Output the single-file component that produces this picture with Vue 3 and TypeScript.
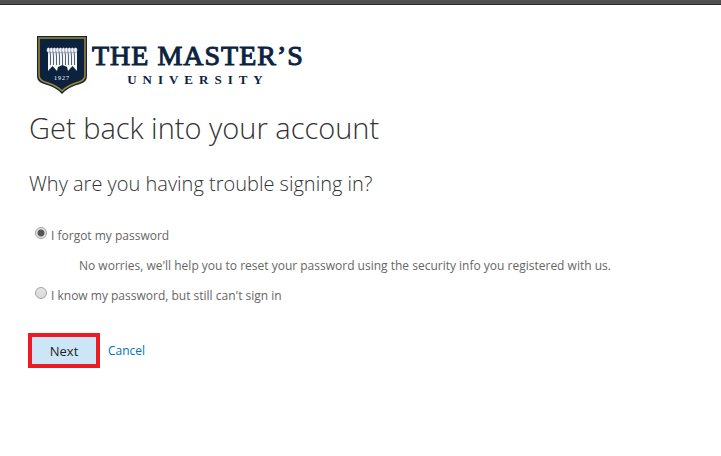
<script setup lang="ts">
import { ref } from 'vue'

type Reason = 'forgot' | 'blocked'

const reason = ref<Reason>('forgot')
const folds: number[] = [11, 14, 17, 20, 23, 26, 29, 32, 35, 38]
</script>

<template>
  <div class="page">
    <div class="topbar"></div>
    <main class="content">
      <header class="brand">
        <svg class="shield" width="50" height="58" viewBox="0 0 50 58" aria-hidden="true">
          <path d="M0 0H50V40Q50 46 43 48Q31 51 25 58Q19 51 7 48Q0 46 0 40Z" fill="#0c2340" />
          <path d="M2 2H48V39Q48 44 42 46Q31 49 25 55Q19 49 8 46Q2 44 2 39Z" fill="none" stroke="#a8862c" stroke-width="1.5" />
          <path d="M11 15H40V35L35.500 30L31 35L30 31L25.500 29L21 31L20 35L15.500 30L11 35Z" fill="#f4f5f7" />
          <path
            v-for="x in folds.slice(0, 9)"
            :key="x"
            :d="`M${x + 2} 16L${x + 2.5} 20V29`"
            fill="none"
            stroke="#0c2340"
            stroke-width="0.7"
          />
          <ellipse
            v-for="x in folds"
            :key="`loop-${x}`"
            :cx="x + 0.5"
            cy="14"
            rx="1.9"
            ry="2.6"
            fill="#f4f5f7"
            stroke="#0c2340"
            stroke-width="0.3"
          />
          <text x="25" y="44" class="year">1927</text>
        </svg>
        <div class="wordmark">
          <span class="name">THE MASTER’S</span>
          <span class="kind">UNIVERSITY</span>
        </div>
      </header>

      <h1>Get back into your account</h1>
      <h2 id="question">Why are you having trouble signing in?</h2>

      <form @submit.prevent>
        <div class="reasons" role="radiogroup" aria-labelledby="question">
          <div class="choice">
            <input id="forgot" v-model="reason" type="radio" name="reason" value="forgot" />
            <label for="forgot">I forgot my password</label>
          </div>
          <p class="hint">No worries, we'll help you to reset your password using the security info you registered with us.</p>
          <div class="choice">
            <input id="blocked" v-model="reason" type="radio" name="reason" value="blocked" />
            <label for="blocked">I know my password, but still can't sign in</label>
          </div>
        </div>
        <div class="actions">
          <button type="submit">Next</button>
          <a href="#">Cancel</a>
        </div>
      </form>
    </main>
  </div>
</template>

<style>
body {
  margin: 0;
  background: #fff;
}
</style>

<style scoped>
.page {
  font-family: "Segoe UI", "Open Sans", "Noto Sans", sans-serif;
  font-size: 12px;
  color: #666;
}
.topbar {
  box-sizing: border-box;
  height: 5px;
  background: #505050;
  border-bottom: 1px solid #2b2b2b;
}
.content {
  padding: 31px 28px;
}
.brand {
  display: flex;
  gap: 5px;
  padding-left: 9px;
}
.shield {
  flex: none;
}
.year {
  font: 6px "Liberation Serif", serif;
  letter-spacing: 1px;
  text-anchor: middle;
  fill: #fff;
}
.wordmark {
  display: flex;
  flex-direction: column;
  align-items: center;
  padding-top: 4px;
  color: #0c2340;
  font-family: "Liberation Serif", serif;
  white-space: nowrap;
}
.name {
  font-size: 28px;
  line-height: 32px;
  letter-spacing: 1px;
  -webkit-text-stroke: 1px #0c2340;
}
.kind {
  font-size: 13px;
  font-weight: bold;
  line-height: 16px;
  letter-spacing: 6px;
}
h1,
h2 {
  margin: 0;
  font-weight: 300;
  color: #333;
}
h1 {
  padding: 14px 1px 0;
  font-size: 29px;
  line-height: 40px;
}
h2 {
  padding: 20px 1px 0;
  font-size: 20px;
  line-height: 32px;
}
.reasons {
  display: flex;
  flex-direction: column;
  gap: 10px;
  padding: 26px 0 0 7px;
}
.choice {
  display: flex;
  align-items: flex-start;
  gap: 4px;
  line-height: 20px;
}
.choice input {
  appearance: none;
  flex: none;
  box-sizing: border-box;
  width: 12px;
  height: 12px;
  margin: 1px 0 0;
  border: 1px solid #a3a3a3;
  border-radius: 50%;
  background: linear-gradient(#e4e4e4, #dadada);
}
.choice input:checked {
  background: radial-gradient(circle, #555 0 3px, #e4e4e4 4px);
}
.hint {
  margin: 0 0 0 44px;
  line-height: 20px;
}
.actions {
  display: flex;
  align-items: center;
  gap: 8px;
  padding-top: 27px;
}
button {
  min-width: 72px;
  height: 35px;
  padding: 0 16px;
  border: 4px solid #ed1c24;
  background: #cde6f7;
  color: #222;
  font: inherit;
  font-size: 13px;
}
a {
  color: #0072c6;
  line-height: 20px;
  text-decoration: none;
}
</style>
